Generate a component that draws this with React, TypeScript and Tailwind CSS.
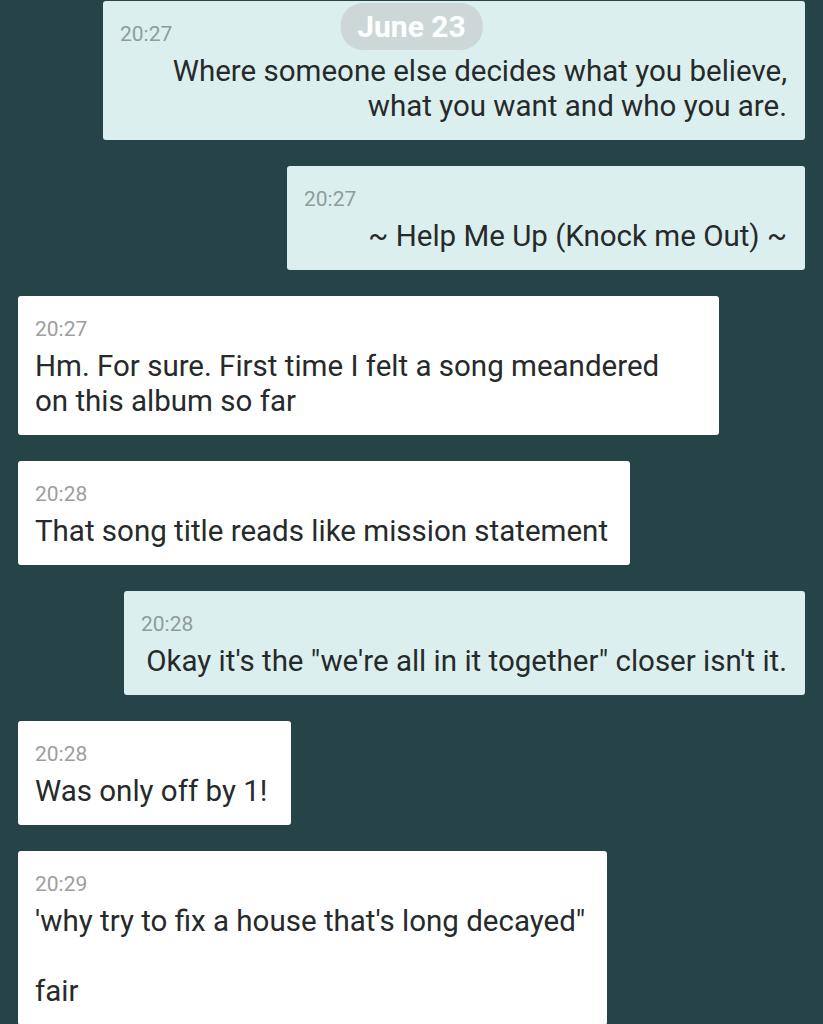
import React from "react";

type Msg = {
    time: string;
    lines: string[];
    mine?: boolean;
    width: string;
};

const messages: Msg[] = [
    {time: "20:27", lines: ["Where someone else decides what you believe,", "what you want and who you are."], mine: true, width: "w-[702px]"},
    {time: "20:27", lines: ["~ Help Me Up (Knock me Out) ~"], mine: true, width: "w-[518px]"},
    {time: "20:27", lines: ["Hm. For sure. First time I felt a song meandered", "on this album so far"], width: "w-[701px]"},
    {time: "20:28", lines: ["That song title reads like mission statement"], width: "w-[612px]"},
    {time: "20:28", lines: ["Okay it's the \"we're all in it together\" closer isn't it."], mine: true, width: "w-[681px]"},
    {time: "20:28", lines: ["Was only off by 1!"], width: "w-[273px]"},
    {time: "20:29", lines: ["'why try to fix a house that's long decayed\"", "", "fair"], width: "w-[589px]"},
];

const Bubble = ({msg}: {msg: Msg}) => {
    return (
        <div className={`flex ${msg.mine ? "justify-end" : "justify-start"}`}>
            <div
                className={`${msg.width} rounded-[3px] pl-[17px] pr-[18px] pt-[21px] pb-[16px] ${
                    msg.mine ? "bg-[#dbf0ee]" : "bg-white"
                }`}
            >
                <div className={`text-[21px] leading-[24px] ${msg.mine ? "text-[#8e9d9b]" : "text-[#9e9e9e]"}`}>
                    {msg.time}
                </div>
                <div
                    className={`mt-[8px] text-[29.5px] leading-[35px] text-[#262a2a] ${msg.mine ? "text-right" : "text-left"}`}
                >
                    {msg.lines.map((l, i) => (
                        <div key={i} className="min-h-[35px] whitespace-nowrap">
                            {l}
                        </div>
                    ))}
                </div>
            </div>
        </div>
    );
};

export default function App() {
    return (
        <div className="relative h-[1024px] w-[823px] overflow-hidden bg-[#264448] font-['Roboto',sans-serif]">
            <div className="flex flex-col gap-[26px] px-[18px] pt-[1px]">
                {messages.map((m, i) => (
                    <Bubble key={i} msg={m} />
                ))}
            </div>

            <div className="absolute left-1/2 top-[3px] -translate-x-1/2 rounded-[22px] bg-[#cdd7d7] px-[17px] py-[6px] text-[30px] font-bold leading-[35px] text-white">
                June 23
            </div>
        </div>
    );
}
